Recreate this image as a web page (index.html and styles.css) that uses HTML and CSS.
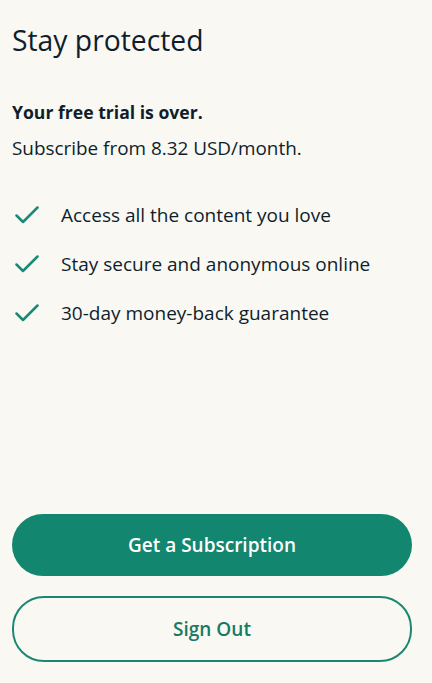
FILE: index.html
```html
<!DOCTYPE html>
<html lang="en">
<head>
    <meta charset="UTF-8" />
    <meta name="viewport" content="width=device-width, initial-scale=1" />
    <title>Stay protected</title>
    <link rel="stylesheet" href="styles.css">
</head>
<body>
    <div class="panel">
        <h1 class="title">Stay protected</h1>

        <p class="lead">Your free trial is over.</p>
        <p class="price">Subscribe from 8.32 USD/month.</p>

        <ul class="perks">
            <li>
                <svg class="check" viewBox="0 0 24 18" width="24" height="18"><path d="M1.5 9.5 L8 16 L22.5 1.5" /></svg>
                <span>Access all the content you love</span>
            </li>
            <li>
                <svg class="check" viewBox="0 0 24 18" width="24" height="18"><path d="M1.5 9.5 L8 16 L22.5 1.5" /></svg>
                <span>Stay secure and anonymous online</span>
            </li>
            <li>
                <svg class="check" viewBox="0 0 24 18" width="24" height="18"><path d="M1.5 9.5 L8 16 L22.5 1.5" /></svg>
                <span>30-day money-back guarantee</span>
            </li>
        </ul>

        <div class="actions">
            <button class="btn btn-primary">Get a Subscription</button>
            <button class="btn btn-outline">Sign Out</button>
        </div>
    </div>
</body>
</html>
```

FILE: styles.css
```css
html, body {
    height: 100%;
}

body {
    margin: 0;
    font-family: 'Open Sans', 'Noto Sans', sans-serif;
    background: #f9f8f3;
    color: #0f1e2c;
}

.panel {
    box-sizing: border-box;
    height: 100%;
    padding: 22px 20px 21px 12px;
    display: flex;
    flex-direction: column;
}

.title {
    margin: 0;
    font-size: 28.3px;
    font-weight: 400;
    line-height: 36px;
}

.lead {
    margin: 42px 0 0;
    font-size: 17.6px;
    font-weight: 700;
    line-height: 24px;
}

.price {
    margin: 12px 0 0;
    font-size: 18.9px;
    line-height: 24px;
}

.perks {
    list-style: none;
    margin: 43px 0 0;
    padding: 0;
    display: flex;
    flex-direction: column;
    gap: 25px;
}

.perks li {
    display: flex;
    align-items: center;
    font-size: 19px;
    line-height: 24px;
}

.check {
    margin-left: 3px;
    margin-right: 22px;
    fill: none;
    stroke: #1a8a77;
    stroke-width: 2.5;
    stroke-linecap: round;
    stroke-linejoin: round;
}

.actions {
    margin-top: auto;
    display: flex;
    flex-direction: column;
    gap: 20px;
}

.btn {
    box-sizing: border-box;
    width: 100%;
    height: 62px;
    border-radius: 32px;
    font-family: inherit;
    font-size: 19px;
    font-weight: 600;
    cursor: pointer;
}

.btn-primary {
    border: none;
    background: #12866e;
    color: #ffffff;
}

.btn-outline {
    height: 66px;
    border: 2px solid #1b8771;
    background: transparent;
    color: #177a63;
}
```
